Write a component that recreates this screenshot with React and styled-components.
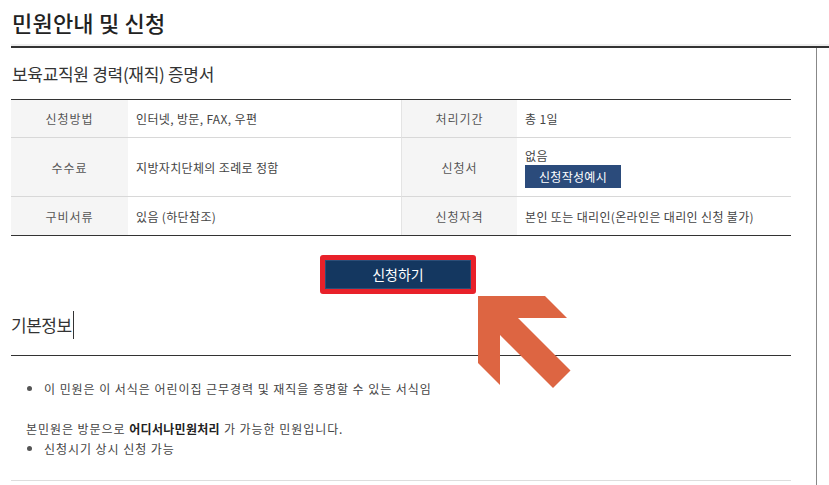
import React from "react";
import styled, { createGlobalStyle } from "styled-components";

const Global = createGlobalStyle`
  html, body { margin: 0; padding: 0; background: #fff; }
  body {
    font-family: "Noto Sans CJK KR", "Noto Sans", sans-serif;
    color: #333;
    overflow: hidden;
  }
`;

const Page = styled.div`
  position: relative;
  width: 829px;
  height: 485px;
  overflow: hidden;
  padding-left: 11px;
  box-sizing: border-box;
`;

const Header = styled.div`
  height: 46px;
  border-bottom: 2px solid #333;
  box-shadow: 0 -2px 0 #eee inset;
  display: flex;
  align-items: center;
`;

const PageTitle = styled.h1`
  margin: 0 0 3px 1px;
  font-size: 22px;
  font-weight: 500;
  color: #222;
  letter-spacing: 0.2px;
`;

const Content = styled.div`
  width: 806px;
  height: 437px;
  border-right: 1px solid #888;
  box-sizing: border-box;
`;

const Inner = styled.div`
  width: 780px;
  display: flex;
  flex-direction: column;
`;

const SectionTitle = styled.h2`
  margin: 0;
  height: 51px;
  display: flex;
  align-items: center;
  padding-left: 1px;
  font-size: 17px;
  font-weight: 400;
  color: #333;
  letter-spacing: -0.3px;
`;

const Table = styled.div`
  display: grid;
  grid-template-columns: 117px 273px 116px 274px;
  border-top: 1px solid #333;
  border-bottom: 1px solid #333;
`;

const Cell = styled.div`
  height: ${(p) => p.$h}px;
  display: flex;
  flex-direction: column;
  justify-content: center;
  align-items: ${(p) => (p.$label ? "center" : "flex-start")};
  padding-left: ${(p) => (p.$label ? 0 : 8)}px;
  background: ${(p) => (p.$label ? "#f5f5f5" : "#fff")};
  border-bottom: ${(p) => (p.$last ? "none" : "1px solid #d8d8d8")};
  border-left: ${(p) => (p.$divider ? "1px solid #e4e4e4" : "none")};
  font-size: 12px;
  color: ${(p) => (p.$label ? "#555" : "#444")};
  letter-spacing: ${(p) => (p.$label ? 1 : 0.35)}px;
  box-sizing: border-box;
`;

const SmallButton = styled.span`
  margin-top: 1px;
  width: 96px;
  height: 23px;
  background: #2b4b7b;
  color: #fff;
  font-size: 12px;
  display: flex;
  align-items: center;
  justify-content: center;
  letter-spacing: 0.3px;
`;

const ButtonRow = styled.div`
  display: flex;
  justify-content: center;
  padding-top: 19px;
  padding-right: 6px;
`;

const Highlight = styled.div`
  border: 5px solid #e8212a;
  border-radius: 3px;
`;

const ApplyButton = styled.button`
  width: 146px;
  height: 29px;
  background: #143760;
  border: 1px solid #2c4e78;
  color: #fff;
  font-family: inherit;
  font-size: 14px;
  letter-spacing: 0;
  display: flex;
  align-items: center;
  justify-content: center;
  padding: 0 0 1px;
`;

const InfoTitle = styled.h2`
  margin: 0;
  height: 62px;
  display: flex;
  align-items: center;
  font-size: 17px;
  font-weight: 400;
  color: #333;
  letter-spacing: -0.5px;
  border-bottom: 1px solid #333;
  box-sizing: border-box;
`;

const Caret = styled.span`
  display: inline-block;
  width: 1px;
  height: 28px;
  background: #333;
  margin-left: 1px;
`;

const Body = styled.div`
  height: 125px;
  border-bottom: 1px solid #ddd;
  box-sizing: border-box;
  padding-top: 23px;
  font-size: 12px;
  color: #444;
  letter-spacing: 0.95px;
`;

const Bullet = styled.div`
  display: flex;
  align-items: center;
  height: 19px;
  padding-left: 16px;
  &::before {
    content: "";
    width: 5px;
    height: 5px;
    border-radius: 50%;
    background: #555;
    margin-right: 12px;
  }
`;

const Para = styled.div`
  height: 21px;
  display: flex;
  align-items: center;
  padding-left: 15px;
  margin-top: 20px;
  b { font-weight: 700; color: #222; margin-right: 4px; letter-spacing: 0.3px; }
`;

const Arrow = styled.svg`
  position: absolute;
  left: 0;
  top: 0;
  pointer-events: none;
`;

export default function App() {
  return (
    <>
      <Global />
      <Page>
        <Header>
          <PageTitle>민원안내 및 신청</PageTitle>
        </Header>
        <Content>
          <Inner>
            <SectionTitle>보육교직원 경력(재직) 증명서</SectionTitle>
            <Table>
              <Cell $label $h={38}>신청방법</Cell>
              <Cell $h={38}>인터넷, 방문, FAX, 우편</Cell>
              <Cell $label $divider $h={38}>처리기간</Cell>
              <Cell $h={38}>총 1일</Cell>

              <Cell $label $h={59}>수수료</Cell>
              <Cell $h={59}>지방자치단체의 조례로 정함</Cell>
              <Cell $label $divider $h={59}>신청서</Cell>
              <Cell $h={59}>
                <span>없음</span>
                <SmallButton>신청작성예시</SmallButton>
              </Cell>

              <Cell $label $last $h={38}>구비서류</Cell>
              <Cell $last $h={38}>있음 (하단참조)</Cell>
              <Cell $label $last $divider $h={38}>신청자격</Cell>
              <Cell $last $h={38}>본인 또는 대리인(온라인은 대리인 신청 불가)</Cell>
            </Table>
            <ButtonRow>
              <Highlight>
                <ApplyButton>신청하기</ApplyButton>
              </Highlight>
            </ButtonRow>
            <InfoTitle>
              기본정보
              <Caret />
            </InfoTitle>
            <Body>
              <Bullet>이 민원은 이 서식은 어린이집 근무경력 및 재직을 증명할 수 있는 서식임</Bullet>
              <Para>
                본민원은 방문으로&nbsp;<b>어디서나민원처리</b>가 가능한 민원입니다.
              </Para>
              <Bullet>신청시기 상시 신청 가능</Bullet>
            </Body>
          </Inner>
        </Content>
        <Arrow width="829" height="485" viewBox="0 0 829 485">
          <polygon
            fill="#dd6542"
            points="478,296 545,296 567,318 518,318 570.5,370.5 553,388 500,335 500,385 478,363"
          />
        </Arrow>
      </Page>
    </>
  );
}
